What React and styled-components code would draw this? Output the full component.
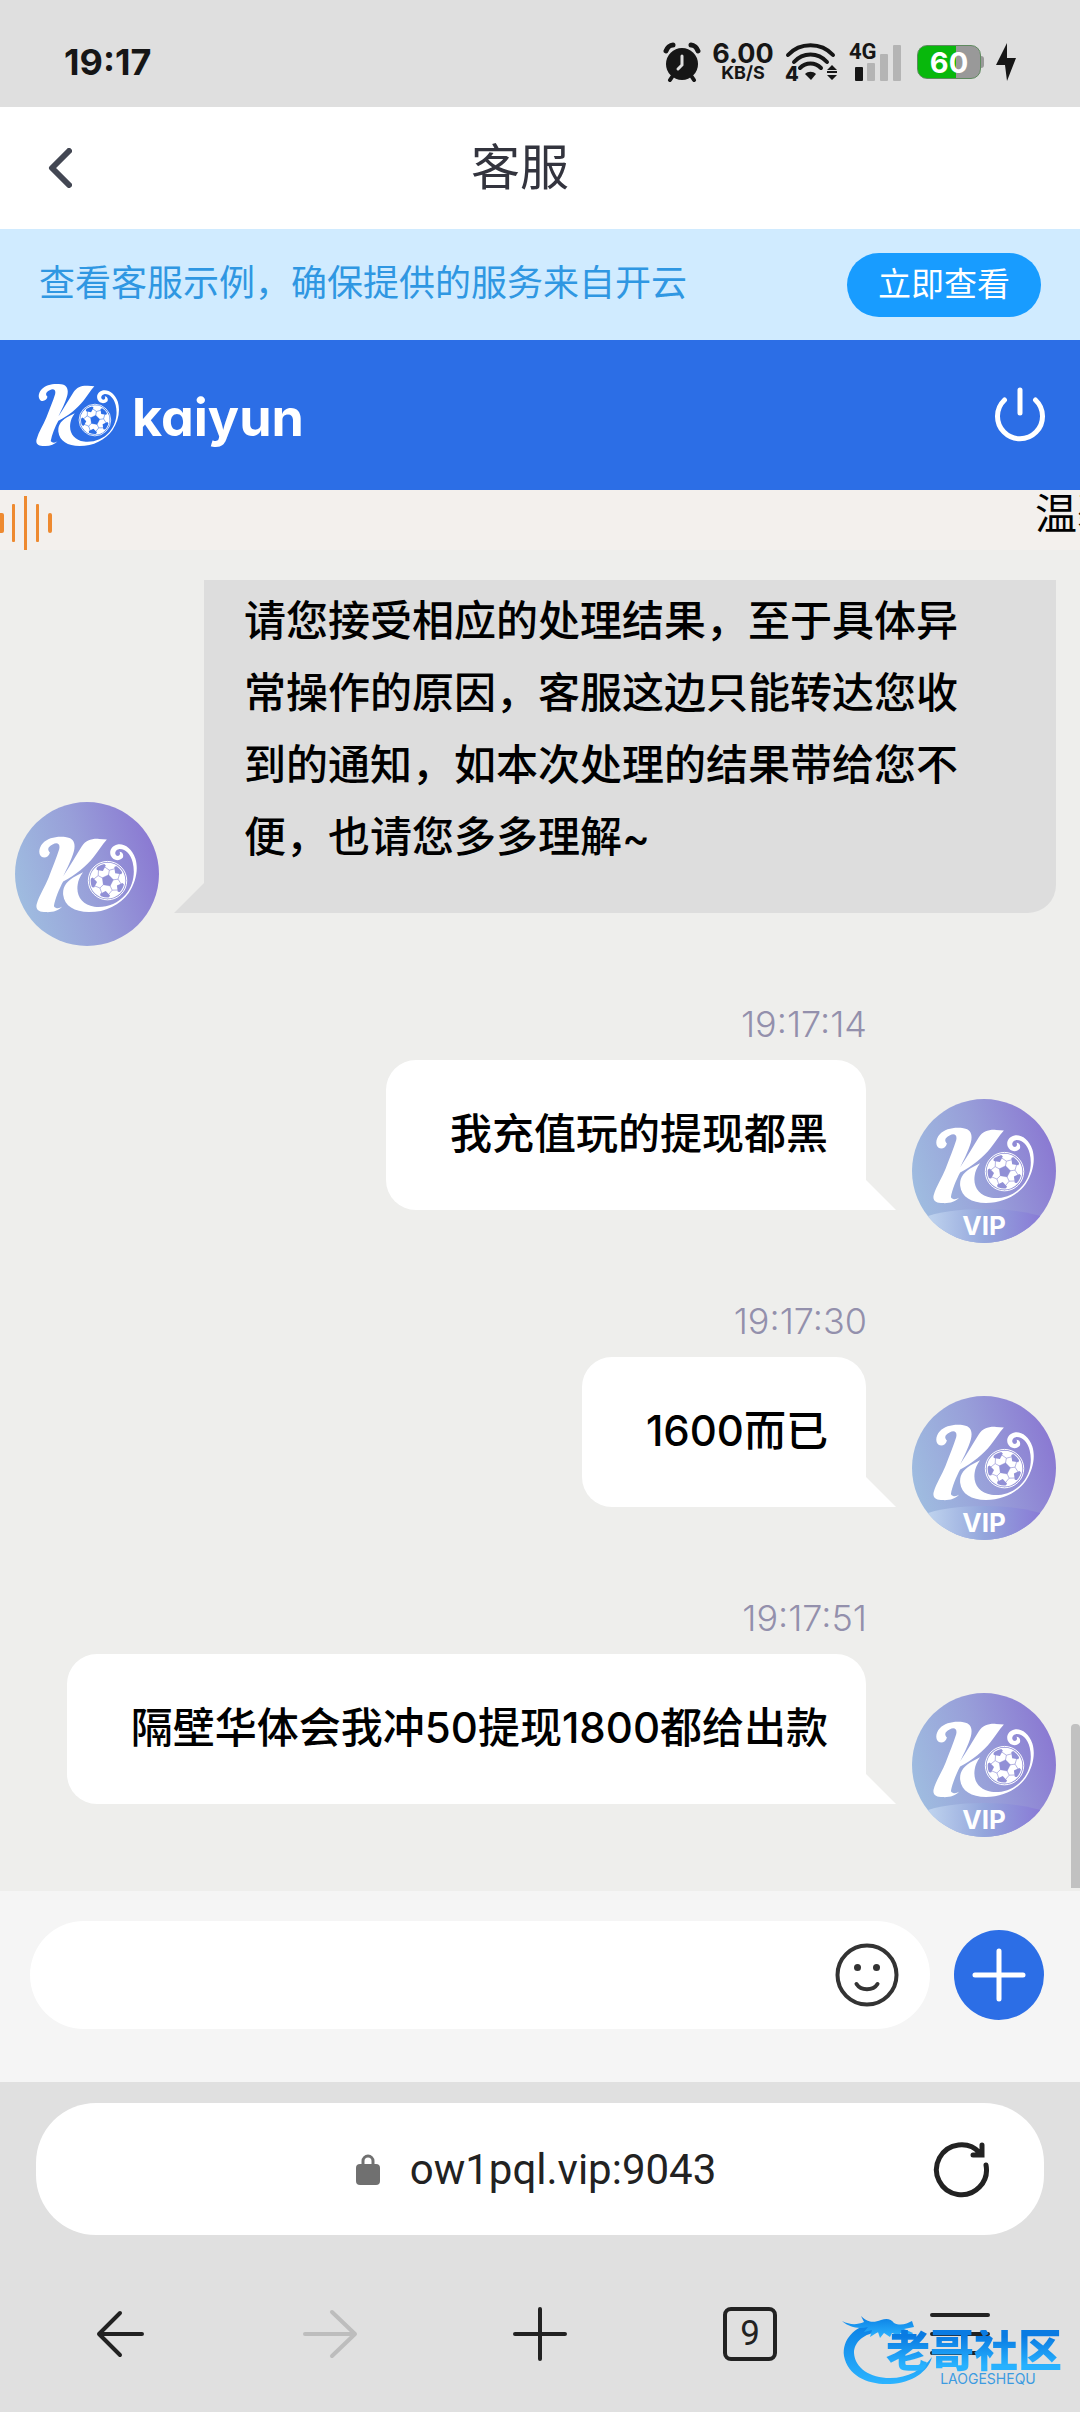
import React from "react";
import styled, { createGlobalStyle, css } from "styled-components";

const sans = `Inter, "Noto Sans CJK SC", sans-serif`;

const Global = createGlobalStyle`
  *, *::before, *::after { box-sizing: border-box; }
  body { margin: 0; background: #eeeeec; }
  button, input { font: inherit; color: inherit; margin: 0; padding: 0; border: 0; background: none; }
  svg { display: block; flex: none; }
`;

const Page = styled.div`
  display: flex;
  flex-direction: column;
  min-height: 100vh;
  overflow-x: hidden;
  font-family: ${sans};
  color: #000;
`;

/* ---------- status bar ---------- */
const StatusBar = styled.div`
  display: flex;
  align-items: center;
  justify-content: space-between;
  height: 107px;
  padding: 16px 64px 0 64px;
  background: #dfdfdf;
  color: #161616;
`;
const Clock = styled.time`
  font-size: 36px;
  font-weight: 700;
  line-height: 40px;
`;
const StatusIcons = styled.div`
  display: flex;
  align-items: center;
  gap: 12px;
`;
const Speed = styled.div`
  display: flex;
  flex-direction: column;
  align-items: center;
  width: 60px;
  font-size: 27px;
  font-weight: 700;
  line-height: 22px;
`;
const SpeedUnit = styled.span`
  font-size: 18px;
  line-height: 16px;
`;
const WifiBox = styled.div`
  display: grid;
  font-size: 20px;
  font-weight: 800;
  line-height: 14px;

  > * {
    grid-area: 1 / 1;
  }
`;
const WifiBand = styled.span`
  align-self: end;
`;
const Signal = styled.div`
  display: grid;
  width: 52px;
  height: 38px;
`;
const SignalLabel = styled.span`
  grid-area: 1 / 1;
  font-family: Roboto, sans-serif;
  font-size: 22px;
  font-weight: 700;
  line-height: 18px;
`;
const SignalBars = styled.svg`
  grid-area: 1 / 1;
  align-self: end;
  justify-self: end;
`;
const BatteryWrap = styled.div`
  display: flex;
  align-items: center;
  margin-left: 4px;
`;
const Battery = styled.div`
  width: 64px;
  height: 34px;
  border-radius: 10px;
  border: 1px solid #5f8a5f;
  background: linear-gradient(90deg, #08b80c 62%, #999 62%);
  color: #fff;
  font-size: 29px;
  font-weight: 700;
  line-height: 33px;
  text-align: center;
`;
const BatteryNub = styled.span`
  width: 3px;
  height: 12px;
  border-radius: 0 3px 3px 0;
  background: #999;
`;

/* ---------- header ---------- */
const Header = styled.header`
  display: grid;
  grid-template-columns: 80px 1fr 120px;
  align-items: center;
  height: 122px;
  padding: 0 20px;
  background: #fff;
`;
const IconButton = styled.button`
  display: grid;
  place-items: center;
  cursor: pointer;
`;
const Title = styled.h1`
  margin: 0;
  font-size: 49px;
  font-weight: 400;
  line-height: 56px;
  text-align: center;
  color: #33343e;
`;

const Notice = styled.section`
  display: flex;
  align-items: center;
  justify-content: space-between;
  height: 111px;
  padding: 0 39px;
  background: #d0ebff;
  font-size: 36px;
  line-height: 50px;
  color: #2f97e2;
`;
const NoticeText = styled.span`
  padding-bottom: 4px;
`;
const NoticeButton = styled.button`
  height: 64px;
  padding: 0 31px 2px;
  border-radius: 32px;
  background: #189cff;
  color: #fff;
  font-size: 33px;
  line-height: 60px;
`;

const Brand = styled.div`
  display: flex;
  align-items: center;
  height: 150px;
  padding: 0 34px 0 36px;
  background: #2c6ee6;
  color: #fff;
`;
const Wordmark = styled.span`
  flex: 1;
  margin-left: 12px;
  padding-top: 6px;
  font-size: 52px;
  font-weight: 700;
  line-height: 64px;
  font-feature-settings: "cv11";
`;

const Ticker = styled.div`
  display: grid;
  grid-template-columns: 1fr 45px;
  align-items: end;
  height: 60px;
  background: #f3f0ed;
`;
const TickerText = styled.span`
  align-self: start;
  overflow: hidden;
  white-space: nowrap;
  font-size: 42px;
  line-height: 48px;
`;

/* ---------- chat ---------- */
const Chat = styled.main`
  position: relative;
  flex: 1;
  display: flex;
  flex-direction: column;
  gap: 57px;
  padding: 30px 24px 54px 15px;
  background: #eeeeec;
`;
const Group = styled.article`
  display: flex;
  flex-direction: column;
  gap: 16px;
`;
const Stamp = styled.time`
  align-self: flex-end;
  padding: 1px 189px 0 0;
  font-size: 36px;
  font-weight: 300;
  line-height: 40px;
  color: #9390ac;
`;
const Row = styled.div`
  display: flex;
  align-items: flex-end;
  justify-content: ${(p) => (p.$own ? "flex-end" : "flex-start")};
  gap: ${(p) => (p.$own ? "16px" : "15px")};
`;
const BubbleWrap = styled.div`
  display: flex;
  align-items: flex-end;
  min-width: 0;
  flex: ${(p) => (p.$own ? "none" : "1")};
  margin-bottom: 33px;
`;
const Tail = styled.span`
  flex: none;
  width: 30px;
  height: 30px;
  background: ${(p) => (p.$own ? "#fff" : "#ddd")};
  clip-path: ${(p) => (p.$own ? "polygon(0 0, 0 100%, 100% 100%)" : "polygon(100% 0, 100% 100%, 0 100%)")};
`;
const Bubble = styled.p`
  margin: 0;
  font-size: 42px;
  font-weight: 500;
  line-height: 72px;
  ${(p) =>
    p.$own
      ? css`
          padding: 38px 38px 40px 64px;
          border-radius: 30px 30px 0 30px;
          background: #fff;
        `
      : css`
          flex: 1;
          padding: 5px 64px 40px 40px;
          border-radius: 0 0 28px 0;
          background: #ddd;
        `}
`;
const AvatarBox = styled.div`
  flex: none;
  display: grid;
  width: 144px;
  height: 144px;
`;
const AvatarArt = styled.svg`
  grid-area: 1 / 1;
`;
const AvatarTag = styled.span`
  grid-area: 1 / 1;
  z-index: 1;
  align-self: end;
  justify-self: center;
  padding-bottom: 2px;
  color: #fff;
  font-size: 26px;
  font-weight: 700;
  line-height: 30px;
`;
const ScrollThumb = styled.span`
  position: absolute;
  right: 0;
  bottom: 3px;
  width: 9px;
  height: 164px;
  border-radius: 4px 4px 0 0;
  background: #c1c1c1;
`;

/* ---------- composer ---------- */
const Composer = styled.form`
  display: flex;
  align-items: center;
  gap: 24px;
  padding: 30px 36px 53px 30px;
  background: #f5f5f5;
`;
const Field = styled.div`
  flex: 1;
  display: flex;
  align-items: center;
  height: 108px;
  padding: 0 30px 0 40px;
  border-radius: 54px;
  background: #fff;
`;
const TextInput = styled.input`
  flex: 1;
  min-width: 0;
  height: 72px;
  font-size: 42px;
  outline: none;
`;
const AddButton = styled(IconButton)`
  width: 90px;
  height: 90px;
  border-radius: 50%;
  background: #2c6ee6;
`;

/* ---------- browser chrome ---------- */
const Browser = styled.footer`
  position: relative;
  height: 330px;
  padding: 21px 0 0;
  background: #e0e0e0;
  color: #222;
`;
const Address = styled.div`
  display: grid;
  grid-template-columns: 1fr auto 1fr;
  align-items: center;
  height: 132px;
  margin: 0 36px;
  padding: 0 54px 0 46px;
  border-radius: 60px;
  background: #fff;
`;
const AddressButton = styled.button`
  grid-column: 2;
  display: flex;
  align-items: center;
  gap: 30px;
  padding-top: 2px;
  font-family: Roboto, sans-serif;
  font-size: 42px;
  line-height: 50px;
`;
const Reload = styled(IconButton)`
  justify-self: end;
`;
const Tools = styled.nav`
  display: grid;
  grid-template-columns: repeat(5, 1fr);
  height: 108px;
  margin-top: 45px;
  padding: 0 15px;
`;
const TabCount = styled.span`
  display: block;
  width: 54px;
  height: 54px;
  border: 4px solid #222;
  border-radius: 8px;
  font-family: Roboto, sans-serif;
  font-size: 35px;
  line-height: 46px;
  text-align: center;
`;
const Watermark = styled.div`
  position: absolute;
  right: 18px;
  bottom: 26px;
  display: flex;
  align-items: flex-end;
  pointer-events: none;
`;
const WatermarkText = styled.div`
  display: flex;
  flex-direction: column;
  align-items: center;
  margin-left: -46px;
`;
const WatermarkName = styled.strong`
  font-size: 44px;
  font-weight: 900;
  line-height: 42px;
  background: linear-gradient(180deg, #0a7be2 15%, #28b2ff 85%);
  background-clip: text;
  -webkit-background-clip: text;
  color: transparent;
`;
const WatermarkSub = styled.small`
  font-size: 14px;
  line-height: 14px;
  padding-left: 28px;
  color: #3c9be0;
`;

/* ---------- drawings ---------- */
const pent = (cx, cy, r, rot) =>
  Array.from({ length: 5 }, (_, i) => {
    const a = ((rot + i * 72 - 90) * Math.PI) / 180;
    return `${(cx + r * Math.cos(a)).toFixed(1)},${(cy + r * Math.sin(a)).toFixed(1)}`;
  }).join(" ");

function KoMark({ ink, ...rest }) {
  const spokes = [0, 1, 2, 3, 4].map((i) => ((i * 72 - 80) * Math.PI) / 180);
  return (
    <svg viewBox="130 141 308 231" {...rest}>
      <g fill="#fff">
        <path d="M148 204C136 196 138 176 150 163C166 145 196 140 222 144C246 147 250 166 244 188C238 210 224 238 212 262C232 232 250 200 268 172C280 154 296 148 320 149L344 151C330 166 318 186 304 204C282 232 250 258 212 278C200 300 188 330 184 352C190 360 200 360 209 353C198 366 180 371 160 370C140 370 128 364 132 346C140 318 156 296 168 266C180 234 192 206 200 180C204 164 194 158 180 166C168 172 162 180 172 190C170 202 158 208 148 204Z" />
        <path d="M252 260C222 276 210 292 212 318C216 352 246 370 290 370C340 370 384 348 410 312C432 280 440 240 430 208C420 178 396 162 376 166C358 170 350 186 356 200C362 214 380 218 392 206C396 196 390 188 382 188C386 194 382 202 374 200C366 196 368 182 380 180C400 178 416 196 422 220C430 252 424 290 400 318C376 346 340 358 306 354C270 348 250 322 256 286C258 274 262 264 272 250Z" />
        <circle cx="346" cy="275" r="54" />
      </g>
      <circle cx="346" cy="275" r="58" fill="none" stroke="#fff" strokeWidth="3" />
      <clipPath id="ball"><circle cx="346" cy="275" r="51" /></clipPath>
      <g clipPath="url(#ball)" fill={ink} stroke={ink}>
        <polygon points={pent(346, 275, 18, 10)} />
        {spokes.map((a, i) => {
          const x = (r, d = 0) => 346 + r * Math.cos(a + d);
          const y = (r, d = 0) => 275 + r * Math.sin(a + d);
          return (
            <g key={i}>
              <path d={`M${x(16)} ${y(16)}L${x(32)} ${y(32)}L${x(44, 0.42)} ${y(44, 0.42)}M${x(32)} ${y(32)}L${x(44, -0.42)} ${y(44, -0.42)}`} fill="none" strokeWidth="2" />
              <polygon stroke="none" points={pent(346 + 48 * Math.cos(a + 0.628), 275 + 48 * Math.sin(a + 0.628), 16, i * 72 + 46 + 180)} />
            </g>
          );
        })}
      </g>
    </svg>
  );
}

function Avatar({ vip }) {
  const id = vip ? "vip" : "agent";
  return (
    <AvatarBox>
      <AvatarArt viewBox="0 0 144 144" width="144" height="144" role="img" aria-label={vip ? "VIP" : "Kaiyun"}>
        <defs>
          <linearGradient id={`${id}-bg`} x1="0" y1=".65" x2="1" y2=".35">
            <stop offset="0" stopColor="#9fbde0" />
            <stop offset=".5" stopColor="#989fd9" />
            <stop offset="1" stopColor="#8a78d2" />
          </linearGradient>
          <linearGradient id={`${id}-band`} x1="0" x2="1">
            <stop offset="0" stopColor="#c3d8f0" />
            <stop offset=".5" stopColor="#94a6dc" />
            <stop offset="1" stopColor="#8876d6" />
          </linearGradient>
          <clipPath id={`${id}-clip`}><circle cx="72" cy="72" r="72" /></clipPath>
        </defs>
        <g clipPath={`url(#${id}-clip)`}>
          <rect width="144" height="144" fill={`url(#${id}-bg)`} />
          {vip && <path d="M10 119C40 107 104 107 134 119V144H10Z" fill={`url(#${id}-band)`} />}
        </g>
        <KoMark ink="#9190d6" x="21" y={vip ? 28 : 34} width="102" height="77" />
      </AvatarArt>
      {vip && <AvatarTag>VIP</AvatarTag>}
    </AvatarBox>
  );
}

const Alarm = () => (
  <svg width="38" height="40" viewBox="0 0 38 40" fill="none" stroke="#161616">
    <circle cx="19" cy="22" r="16" fill="#161616" stroke="none" />
    <path d="M3 9C4 6 7 3 10 3M35 9C34 6 31 3 28 3" strokeWidth="5" strokeLinecap="round" />
    <path d="M9 35L7 38M29 35L31 38" strokeWidth="4" strokeLinecap="round" />
    <path d="M19 14V23L15 27" stroke="#dfdfdf" strokeWidth="3" strokeLinecap="round" />
  </svg>
);
const Wifi = () => (
  <svg width="52" height="38" viewBox="0 0 52 38" fill="none" stroke="#161616" strokeWidth="4" strokeLinecap="round">
    <path d="M3 12C15-1 36-1 48 12M9 19C18 9 33 9 42 19M15 25C21 19 30 19 36 25" />
    <path d="M20 31C23 28 28 28 31 31L26 37Z" fill="#161616" stroke="none" />
    <path d="M47 22L52 27H42ZM42 32H52L47 37Z" fill="#161616" stroke="none" />
    <path d="M42 29H52" strokeWidth="2" strokeLinecap="butt" />
  </svg>
);

const messages = [
  { time: "19:17:14", text: "我充值玩的提现都黑" },
  { time: "19:17:30", text: "1600而已" },
  { time: "19:17:51", text: "隔壁华体会我冲50提现1800都给出款" },
];

export default function App() {
  return (
    <Page>
      <Global />
      <StatusBar>
        <Clock>19:17</Clock>
        <StatusIcons>
          <Alarm />
          <Speed>6.00<SpeedUnit>KB/S</SpeedUnit></Speed>
          <WifiBox><Wifi /><WifiBand>4</WifiBand></WifiBox>
          <Signal>
            <SignalLabel>4G</SignalLabel>
            <SignalBars width="46" height="36" viewBox="0 0 46 36" fill="#b4b4b4">
              <rect y="22" width="8" height="14" rx="1" fill="#161616" />
              <rect x="12" y="18" width="8" height="18" rx="1" />
              <rect x="25" y="9" width="8" height="27" rx="1" />
              <rect x="38" y="0" width="8" height="36" rx="1" />
            </SignalBars>
          </Signal>
          <BatteryWrap><Battery>60</Battery><BatteryNub /></BatteryWrap>
          <svg width="20" height="38" viewBox="0 0 20 38" fill="#161616"><path d="M11 0L0 22H9L11 38L20 15H11Z" /></svg>
        </StatusIcons>
      </StatusBar>

      <Header>
        <IconButton aria-label="返回">
          <svg width="24" height="40" viewBox="0 0 24 40" fill="none" stroke="#434753" strokeWidth="6" strokeLinecap="round" strokeLinejoin="round"><path d="M21 3L4 20L21 37" /></svg>
        </IconButton>
        <Title>客服</Title>
      </Header>

      <Notice>
        <NoticeText>查看客服示例，确保提供的服务来自开云</NoticeText>
        <NoticeButton>立即查看</NoticeButton>
      </Notice>

      <Brand>
        <KoMark ink="#2c6ee6" width="84" height="64" />
        <Wordmark>kaiyun</Wordmark>
        <IconButton aria-label="退出">
          <svg width="52" height="56" viewBox="0 0 52 56" fill="none" stroke="#fff" strokeWidth="5" strokeLinecap="round"><path d="M26 3V26M10.500 13A22.500 22.500 0 1 0 41.500 13" /></svg>
        </IconButton>
      </Brand>

      <Ticker>
        <svg width="54" height="54" viewBox="0 0 54 54" fill="#ee8a30">
          <rect x="-2" y="17" width="6" height="20" rx="2" />
          <rect x="12" y="8" width="3" height="38" rx="1" />
          <rect x="24" y="0" width="3" height="54" />
          <rect x="36" y="8" width="3" height="38" rx="1" />
          <rect x="48" y="17" width="4" height="20" rx="2" />
        </svg>
        <TickerText>温馨</TickerText>
      </Ticker>

      <Chat>
        <Row>
          <Avatar />
          <BubbleWrap>
            <Tail />
            <Bubble>请您接受相应的处理结果，至于具体异常操作的原因，客服这边只能转达您收到的通知，如本次处理的结果带给您不便，也请您多多理解~</Bubble>
          </BubbleWrap>
        </Row>
        {messages.map((m) => (
          <Group key={m.time}>
            <Stamp>{m.time}</Stamp>
            <Row $own>
              <BubbleWrap $own>
                <Bubble $own>{m.text}</Bubble>
                <Tail $own />
              </BubbleWrap>
              <Avatar vip />
            </Row>
          </Group>
        ))}
        <ScrollThumb />
      </Chat>

      <Composer onSubmit={(e) => e.preventDefault()}>
        <Field>
          <TextInput type="text" aria-label="消息" />
          <IconButton type="button" aria-label="表情">
            <svg width="66" height="66" viewBox="0 0 66 66" fill="none" stroke="#333" strokeWidth="4" strokeLinecap="round">
              <circle cx="33" cy="33" r="29.500" />
              <path d="M22.500 42C27 49 39 49 43.500 42" />
              <circle cx="23.500" cy="25.500" r="3.500" fill="#333" stroke="none" />
              <circle cx="42.500" cy="25.500" r="3.500" fill="#333" stroke="none" />
            </svg>
          </IconButton>
        </Field>
        <AddButton type="button" aria-label="更多">
          <svg width="54" height="54" viewBox="0 0 54 54" stroke="#fff" strokeWidth="5" strokeLinecap="round"><path d="M27 3V51M3 27H51" /></svg>
        </AddButton>
      </Composer>

      <Browser>
        <Address>
          <AddressButton>
            <svg width="24" height="32" viewBox="0 0 24 32"><rect y="10" width="24" height="21" rx="4" fill="#707070" /><path d="M7 11V7A5 5 0 0 1 17 7V11" fill="none" stroke="#707070" strokeWidth="3" /></svg>
            ow1pql.vip:9043
          </AddressButton>
          <Reload aria-label="刷新">
            <svg width="58" height="58" viewBox="0 0 58 58" fill="none" stroke="#222" strokeWidth="5" strokeLinecap="round"><path d="M54 25A25 25 0 1 1 48 13M50 5V15H41" /></svg>
          </Reload>
        </Address>
        <Tools>
          <IconButton aria-label="后退">
            <svg width="48" height="48" viewBox="0 0 48 48" fill="none" stroke="#222" strokeWidth="4" strokeLinecap="round" strokeLinejoin="round"><path d="M46 24H3M24 3L3 24L24 45" /></svg>
          </IconButton>
          <IconButton aria-label="前进" disabled>
            <svg width="56" height="50" viewBox="0 0 56 50" fill="none" stroke="#bdbdbd" strokeWidth="4" strokeLinecap="round" strokeLinejoin="round"><path d="M3 25H53M30 3L53 25L30 47" /></svg>
          </IconButton>
          <IconButton aria-label="新建标签页">
            <svg width="54" height="54" viewBox="0 0 54 54" stroke="#222" strokeWidth="4" strokeLinecap="round"><path d="M27 2V52M2 27H52" /></svg>
          </IconButton>
          <IconButton aria-label="标签页"><TabCount>9</TabCount></IconButton>
          <IconButton aria-label="菜单">
            <svg width="60" height="44" viewBox="0 0 60 44" stroke="#222" strokeWidth="4" strokeLinecap="round"><path d="M2 3H58M2 22H58M2 41H58" /></svg>
          </IconButton>
        </Tools>
        <Watermark>
          <svg width="90" height="70" viewBox="0 0 90 70">
            <defs><linearGradient id="dragon" x2="0" y2="1"><stop stopColor="#0b7fe4" /><stop offset="1" stopColor="#2cb4ff" /></linearGradient></defs>
            <g fill="url(#dragon)">
              <path d="M32 7C12 10 0 24 2 40C6 60 26 69 48 68C70 67 86 56 90 41C80 54 66 62 48 62C28 62 13 52 12 37C12 26 22 17 38 16Z" />
              <path d="M0 5C8 9 15 9 22 6L19 0C27 8 33 6 39 4C45 2 49 3 52 7C58 10 65 8 70 5L72 11L62 13L71 17L69 20L58 17L60 21L50 17L48 21L42 17L38 22L36 16L28 21L30 14L22 16L26 11C17 13 8 12 0 5Z" />
            </g>
          </svg>
          <WatermarkText>
            <WatermarkName>老哥社区</WatermarkName>
            <WatermarkSub>LAOGESHEQU</WatermarkSub>
          </WatermarkText>
        </Watermark>
      </Browser>
    </Page>
  );
}
